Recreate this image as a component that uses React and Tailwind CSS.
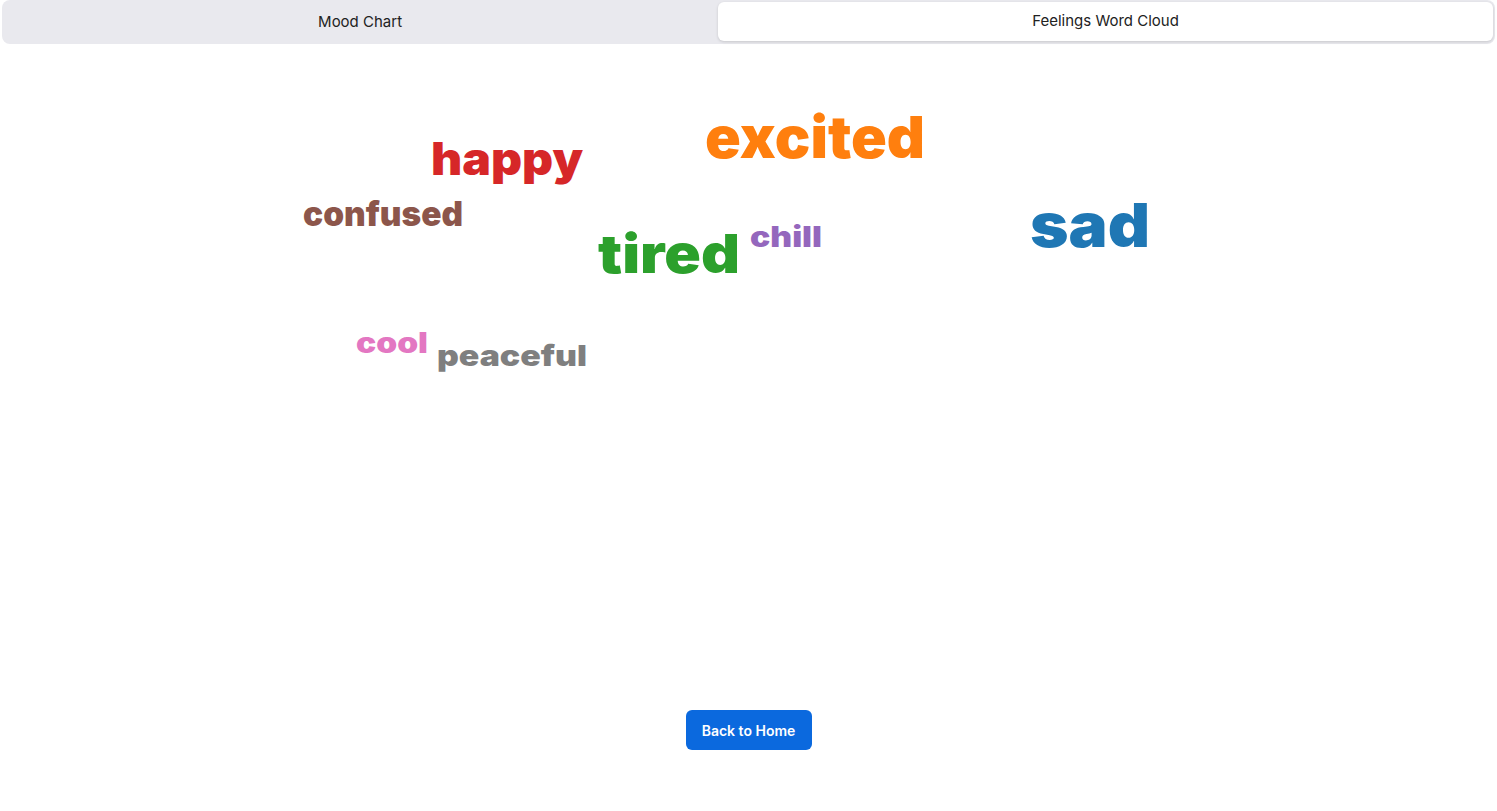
import React from "react";

const words = [
  { t: "happy", x: 507, y: 175, s: 45, w: 152, c: "#d62728" },
  { t: "excited", x: 815, y: 158, s: 58, w: 220, c: "#ff7f0e" },
  { t: "confused", x: 383, y: 226, s: 34, w: 160, c: "#8c564b" },
  { t: "tired", x: 669, y: 273, s: 54, w: 142, c: "#2ca02c" },
  { t: "chill", x: 786, y: 247, s: 28, w: 72, c: "#9467bd" },
  { t: "sad", x: 1090, y: 247, s: 61, w: 120, c: "#1f77b4" },
  { t: "cool", x: 392, y: 353, s: 28, w: 72, c: "#e377c2" },
  { t: "peaceful", x: 512, y: 366, s: 29, w: 150, c: "#7f7f7f" },
];

export default function App() {
  return (
    <div className="w-[1497px] h-[811px] bg-white flex flex-col" style={{ fontFamily: "Inter, 'Noto Sans', sans-serif" }}>
      <div className="mx-[2px] h-[44px] bg-[#e9e9ee] rounded-lg flex items-center px-[2px] gap-[2px] text-[15px] text-[#222]">
        <button className="flex-auto h-[39px] rounded-md">Mood Chart</button>
        <button className="flex-auto h-[39px] rounded-md bg-white shadow-[0_1px_3px_rgba(0,0,0,0.15)] mb-[1px]">Feelings Word Cloud</button>
      </div>
      <div className="h-[620px]">
        <svg width="1497" height="620" viewBox="0 44 1497 620" className="block">
          {words.map((w) => (
            <text
              key={w.t}
              x={w.x}
              y={w.y}
              textAnchor="middle"
              fill={w.c}
              fontSize={w.s}
              fontWeight="900"
              textLength={w.w}
              lengthAdjust="spacingAndGlyphs"
              style={{ fontFamily: "Inter, sans-serif" }}
            >
              {w.t}
            </text>
          ))}
        </svg>
      </div>
      <div className="flex justify-center mt-[46px]">
        <button className="h-[40px] w-[126px] rounded-md bg-[#0b69de] text-white text-[14px] font-semibold">Back to Home</button>
      </div>
    </div>
  );
}
